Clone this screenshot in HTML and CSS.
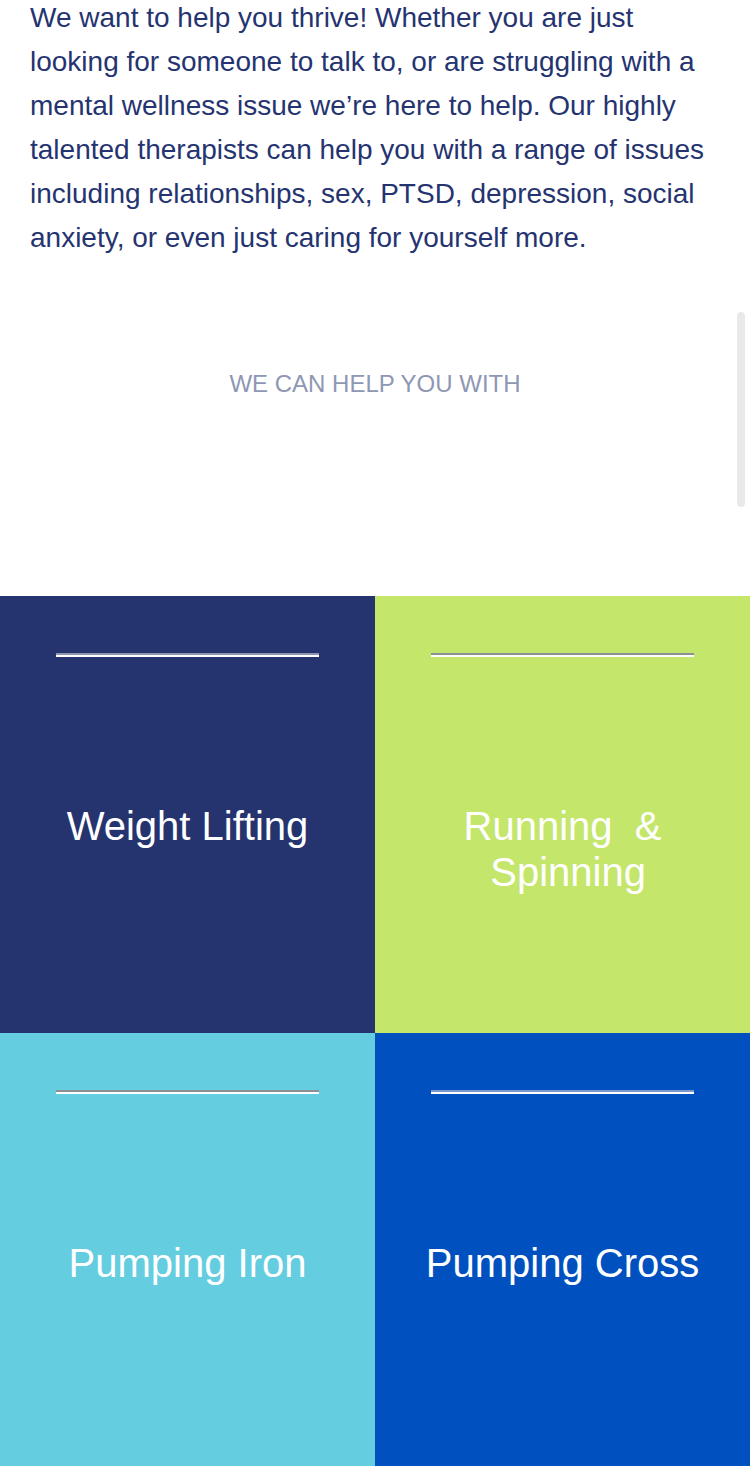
FILE: index.html
```html
<!DOCTYPE html>
<html lang="en">
<head>
<meta charset="utf-8">
<title>We can help you</title>
<link rel="stylesheet" href="styles.css">
</head>
<body>
<section class="intro">
  <p class="intro-text">We want to help you thrive! Whether you are just looking for someone to talk to, or are struggling with a mental wellness issue we’re here to help. Our highly talented therapists can help you with a range of issues including relationships, sex, PTSD, depression, social anxiety, or even just caring for yourself more.</p>
  <h2 class="section-title">WE CAN HELP YOU WITH</h2>
</section>
<section class="grid">
  <div class="tile tile-navy">
    <hr class="rule">
    <h3 class="tile-title">Weight Lifting</h3>
  </div>
  <div class="tile tile-lime">
    <hr class="rule">
    <h3 class="tile-title">Running&nbsp; &amp;<br>&nbsp;Spinning</h3>
  </div>
  <div class="tile tile-cyan">
    <hr class="rule">
    <h3 class="tile-title">Pumping Iron</h3>
  </div>
  <div class="tile tile-blue">
    <hr class="rule">
    <h3 class="tile-title">Pumping Cross</h3>
  </div>
</section>
<div class="scrollbar"></div>
</body>
</html>
```

FILE: styles.css
```css
html, body {
  margin: 0;
  padding: 0;
  background: #ffffff;
}
body {
  font-family: "Liberation Sans", Arial, sans-serif;
  overflow: hidden;
  height: 1466px;
}
.intro {
  padding: 0 30px;
}
.intro-text {
  margin: -4px 0 0;
  font-size: 28px;
  line-height: 44px;
  color: #253470;
}
.section-title {
  margin: 0;
  padding-top: 109px;
  height: 336px;
  box-sizing: border-box;
  text-align: center;
  font-weight: normal;
  font-size: 24px;
  line-height: 30px;
  color: #8e97b3;
}
.grid {
  display: grid;
  grid-template-columns: 375px 375px;
  grid-auto-rows: 437px;
}
.tile {
  display: flex;
  flex-direction: column;
  align-items: center;
  padding-top: 57px;
  box-sizing: border-box;
}
.rule {
  width: 263px;
  margin: 0;
  height: 0;
  border: 0;
  border-top: 2px solid #8a9096;
  border-bottom: 2px solid #ffffff;
}
.tile-title {
  margin: 0;
  margin-top: 146px;
  font-weight: normal;
  font-size: 40px;
  line-height: 46px;
  color: #ffffff;
  text-align: center;
}
.tile-navy { background: #25346f; }
.tile-lime { background: #c4e66b; }
.tile-cyan { background: #65cde0; }
.tile-blue { background: #0051bf; }
.tile-navy .rule { border-top-color: #8a93b0; }
.tile-blue .rule { border-top-color: #7d98cf; }
.scrollbar {
  position: absolute;
  left: 737px;
  top: 312px;
  width: 8px;
  height: 195px;
  border-radius: 4px;
  background: #e9e9e9;
}
```
